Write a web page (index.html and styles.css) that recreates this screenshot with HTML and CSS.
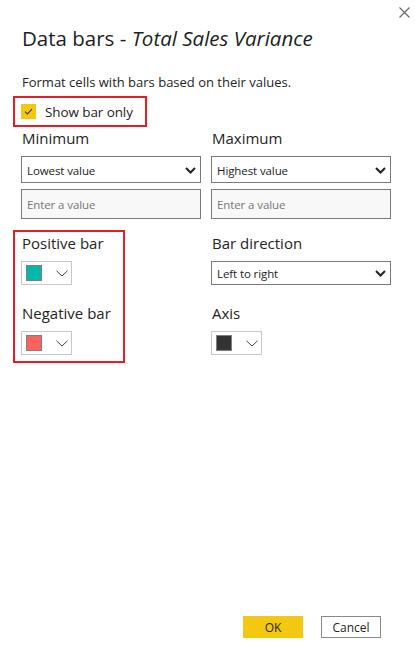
FILE: index.html
```html
<!DOCTYPE html>
<html lang="en">
<head>
<meta charset="utf-8">
<title>Data bars</title>
<link rel="stylesheet" href="styles.css">
</head>
<body>
<div class="dialog">
  <div class="topbar">
    <button class="close" aria-label="Close">
      <svg width="11" height="11" viewBox="0 0 11 11"><path d="M0.5 0.5 L10.5 10.5 M10.5 0.5 L0.5 10.5" stroke="#666" stroke-width="1.1" fill="none"/></svg>
    </button>
  </div>
  <h1 class="title">Data bars - <em>Total Sales Variance</em></h1>
  <p class="desc">Format cells with bars based on their values.</p>
  <div class="highlight check-wrap">
    <label class="check">
      <span class="box"><svg width="15" height="15" viewBox="0 0 15 15"><path d="M4 7.6 L6.4 10 L11 5.2" stroke="#3b3a2e" stroke-width="1.1" fill="none"/></svg></span>
      <span>Show bar only</span>
    </label>
  </div>

  <div class="grid top-grid">
    <div class="field">
      <div class="label">Minimum</div>
      <div class="select"><span>Lowest value</span><svg class="chev" width="11" height="7" viewBox="0 0 11 7"><path d="M1 1 L5.5 5.5 L10 1" stroke="#222" stroke-width="2" fill="none"/></svg></div>
      <input class="input" type="text" placeholder="Enter a value">
    </div>
    <div class="field">
      <div class="label">Maximum</div>
      <div class="select"><span>Highest value</span><svg class="chev" width="11" height="7" viewBox="0 0 11 7"><path d="M1 1 L5.5 5.5 L10 1" stroke="#222" stroke-width="2" fill="none"/></svg></div>
      <input class="input" type="text" placeholder="Enter a value">
    </div>
  </div>

  <div class="grid lower-grid">
    <div class="col highlight bars-box">
      <div class="field2">
        <div class="label">Positive bar</div>
        <div class="picker"><span class="swatch teal"></span><svg class="thin" width="12" height="7" viewBox="0 0 12 7"><path d="M0.5 0.8 L6 6 L11.5 0.8" stroke="#444" stroke-width="1" fill="none"/></svg></div>
      </div>
      <div class="field2">
        <div class="label">Negative bar</div>
        <div class="picker"><span class="swatch coral"></span><svg class="thin" width="12" height="7" viewBox="0 0 12 7"><path d="M0.5 0.8 L6 6 L11.5 0.8" stroke="#444" stroke-width="1" fill="none"/></svg></div>
      </div>
    </div>
    <div class="col right-col">
      <div class="field2">
        <div class="label">Bar direction</div>
        <div class="select"><span>Left to right</span><svg class="chev" width="11" height="7" viewBox="0 0 11 7"><path d="M1 1 L5.5 5.5 L10 1" stroke="#222" stroke-width="2" fill="none"/></svg></div>
      </div>
      <div class="field2">
        <div class="label">Axis</div>
        <div class="picker"><span class="swatch dark"></span><svg class="thin" width="12" height="7" viewBox="0 0 12 7"><path d="M0.5 0.8 L6 6 L11.5 0.8" stroke="#444" stroke-width="1" fill="none"/></svg></div>
      </div>
    </div>
  </div>

  <div class="footer">
    <button class="btn ok">OK</button>
    <button class="btn cancel">Cancel</button>
  </div>
</div>
</body>
</html>
```

FILE: styles.css
```css
* { box-sizing: border-box; }
html, body { margin: 0; padding: 0; background: #fff; }
body {
  font-family: "Open Sans", "Noto Sans", sans-serif;
  color: #252423;
}
.dialog {
  min-height: 649px;
  display: flex;
  flex-direction: column;
  padding: 0 24px 11px 21px;
}
.topbar {
  display: flex;
  justify-content: flex-end;
  height: 25px;
  padding-top: 6px;
  margin-right: -19px;
}
.close {
  border: 0;
  background: none;
  padding: 0;
  width: 12px;
  height: 12px;
  display: flex;
  align-items: center;
  justify-content: center;
}
.title {
  margin: 0 0 0 1px;
  font-size: 20.5px;
  font-weight: 400;
  line-height: 26px;
  letter-spacing: 0;
  color: #201f1e;
}
.title em { font-style: italic; }
.desc {
  margin: 22px 0 0 1px;
  font-size: 13px;
  line-height: 18px;
  letter-spacing: 0;
}
.highlight { border: 2px solid #e31e24; }
.check-wrap {
  align-self: flex-start;
  margin: 5px 0 0 -8px;
  height: 31px;
  padding: 0 12px 0 6px;
  display: flex;
  align-items: center;
}
.check {
  display: flex;
  align-items: center;
  gap: 9px;
  font-size: 13.5px;
  letter-spacing: -0.1px;
}
.box {
  width: 15px;
  height: 15px;
  background: #f2c811;
  display: block;
}
.box svg { display: block; }
.grid {
  display: grid;
  grid-template-columns: 180px 180px;
  column-gap: 10px;
}
.top-grid { margin-top: 1px; }
.field { display: flex; flex-direction: column; }
.label {
  font-size: 15px;
  line-height: 20px;
  height: 20px;
  margin-bottom: 8px;
  margin-left: 1px;
  white-space: nowrap;
  letter-spacing: 0;
}
.select {
  height: 27px;
  border: 1px solid #7a7a7a;
  background: #fff;
  display: flex;
  align-items: center;
  justify-content: space-between;
  padding: 1px 4px 0 5px;
  font-size: 11.5px;
  color: #222;
  letter-spacing: -0.1px;
}
.chev { display: block; }
.input {
  margin-top: 6px;
  height: 30px;
  border: 1px solid #7a7a7a;
  background: #f8f8f8;
  font-family: inherit;
  font-size: 11.5px;
  padding: 0 5px;
  letter-spacing: -0.1px;
  outline: none;
}
.input::placeholder { color: #777; }
.lower-grid { margin-top: 11px; }
.col {
  display: grid;
  grid-template-rows: 52px 52px;
  row-gap: 18px;
}
.bars-box {
  width: 112px;
  margin-left: -8px;
  padding: 1px 0 6px 6px;
}
.right-col { padding-top: 3px; }
.field2 { display: flex; flex-direction: column; align-items: flex-start; }
.right-col .field2 .select { align-self: stretch; }
.picker {
  width: 51px;
  height: 24px;
  border: 1px solid #c8c8c8;
  background: #fff;
  display: flex;
  align-items: center;
  padding-left: 4px;
}
.swatch {
  width: 16px;
  height: 16px;
  border: 1px solid #7f7f7f;
  display: block;
}
.teal { background: #01b8aa; }
.coral { background: #fd625e; }
.dark { background: #333; }
.thin { display: block; margin-left: 14px; }
.footer {
  margin-top: auto;
  display: flex;
  justify-content: flex-end;
  gap: 18px;
  padding-right: 10px;
}
.btn {
  width: 60px;
  height: 22px;
  font-family: inherit;
  font-size: 12px;
  color: #252423;
  padding: 0;
  cursor: pointer;
}
.ok { background: #f2c811; border: 0; }
.cancel { background: #fff; border: 1px solid #8a8a8a; }
```
